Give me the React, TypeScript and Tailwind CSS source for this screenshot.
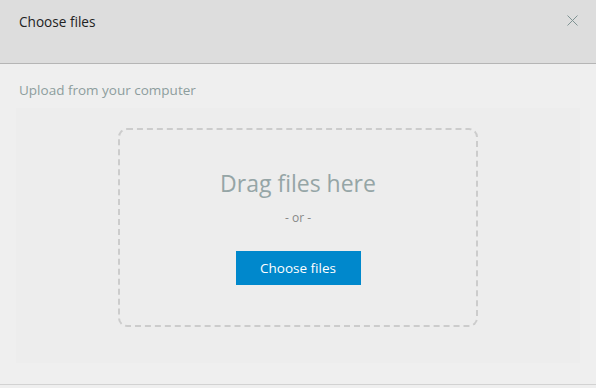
export default function App() {
  return (
    <div
      className="w-[596px] h-[388px] bg-[#efefef] flex flex-col overflow-hidden"
      style={{ fontFamily: '"Open Sans", "Liberation Sans", sans-serif' }}
    >
      <div className="h-[64px] shrink-0 bg-[#dddddd] border-b border-[#b5b5b5] flex items-start justify-between pl-[19px] pr-[18px] pt-[12px]">
        <h1 className="text-[13.6px] leading-[20px] text-[#222]">Choose files</h1>
        <button className="mt-[3px] w-[11px] h-[11px] text-[#7f9393]">
          <svg viewBox="0 0 11 11" width="11" height="11" fill="none" stroke="currentColor" strokeWidth="1">
            <path d="M0.5 0.5 L10.5 10.5 M10.5 0.5 L0.5 10.5" />
          </svg>
        </button>
      </div>

      <div className="flex-1 flex flex-col">
        <p className="pl-[19px] pt-[16px] text-[13.5px] leading-[20px] text-[#8d9d9d]">Upload from your computer</p>
        <div className="mx-[16px] mt-[8px] h-[255px] bg-[#ededed] pt-[20px] flex justify-center">
          <div className="w-[360px] h-[199px] border-2 border-dashed border-[#cccccc] rounded-[9px] flex flex-col items-center pt-[38px]">
            <p className="text-[23px] leading-[30px] text-[#95a5a6]">Drag files here</p>
            <p className="mt-[12px] text-[12px] leading-[16px] text-[#888]">- or -</p>
            <button className="mt-[25px] w-[125px] h-[34px] bg-[#0088cc] text-white text-[13.5px] leading-[20px]">
              Choose files
            </button>
          </div>
        </div>
        <div className="mt-auto mb-[3px] h-px bg-[#d2d2d2]" />
      </div>
    </div>
  );
}
